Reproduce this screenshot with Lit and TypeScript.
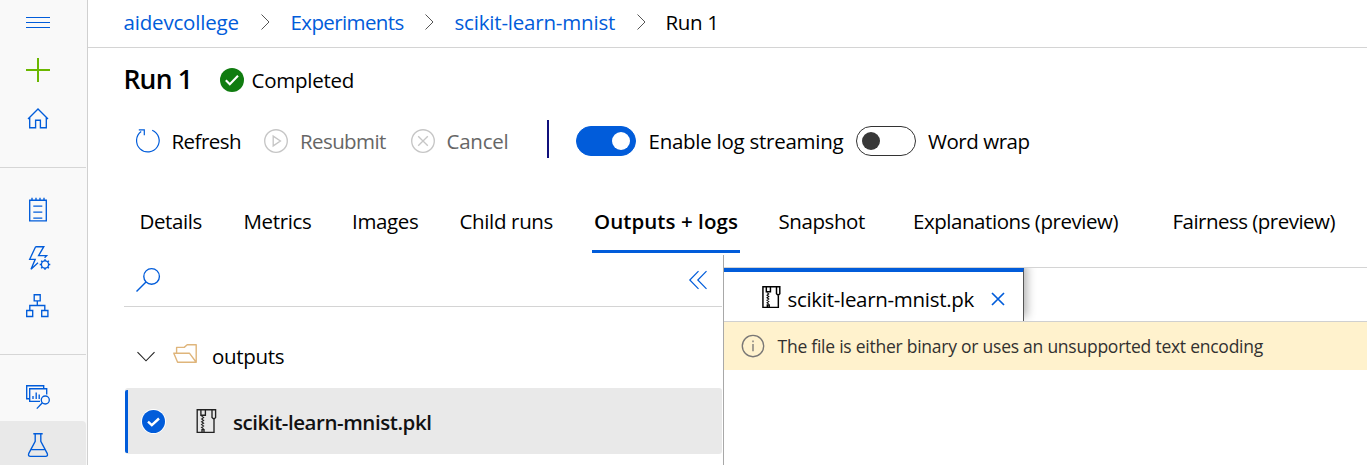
import { LitElement, html, css, svg, nothing } from "lit";
import { customElement } from "lit/decorators.js";
import { styleMap } from "lit/directives/style-map.js";

/** A run of text with the horizontal box and tracking it is set in. */
interface Label {
  text: string;
  gap: number;
  width: number;
  track: number;
  kind?: string;
}

const crumbs: Label[] = [
  { text: "aidevcollege", gap: 35.5, width: 116.5, track: -0.18, kind: "link" },
  { text: "Experiments", gap: 50.5, width: 113.5, track: -0.61, kind: "link" },
  { text: "scikit-learn-mnist", gap: 50.5, width: 161.5, track: -0.19, kind: "link" },
  { text: "Run 1", gap: 49.5, width: 60, track: -0.35 },
];

const tabs: Label[] = [
  { text: "Details", gap: 51.5, width: 63.5, track: -0.4 },
  { text: "Metrics", gap: 40.5, width: 69.5, track: -0.35 },
  { text: "Images", gap: 39, width: 68, track: -0.35 },
  { text: "Child runs", gap: 39.5, width: 95, track: -0.35 },
  { text: "Outputs + logs", gap: 37.5, width: 148, track: 0.06, kind: "active" },
  { text: "Snapshot", gap: 38.5, width: 87.5, track: -0.42 },
  { text: "Explanations (preview)", gap: 47, width: 207, track: -0.45 },
  { text: "Fairness (preview)", gap: 52.5, width: 164, track: -0.52 },
];

const icon = (body: unknown, cls = "") =>
  html`<svg class="icon ${cls}" viewBox="0 0 24 24" width="24" height="24">${body}</svg>`;

const icons = {
  menu: icon(svg`<path stroke-width="1" d="M0 7.5H24M0 12.5H24M0 17.5H24"/>`),
  add: icon(svg`<path stroke-width="2" d="M0 12H24M12 0V24"/>`, "green"),
  home: icon(svg`<path d="M2 13 12 3 22 13M3.7 11.6V21.7H9.6V14.2H14.4V21.7H20.3V11.6"/>`),
  notebook: icon(svg`<path d="M3.7 2.7H20.3V23.3H3.7ZM6 .2V3M10 .2V3M14 .2V3M18 .2V3M7.3 8.6H16.3M7.3 14.6H16.3M7.3 20.6H16.3" transform="translate(0 -.5)"/>`),
  automl: icon(svg`<path d="M9.6.7H17.8L12.6 9.6H20.6L18.6 11.7M9.6.7 3.7 13.3H9.2L5 23.2 12 16.8"/>
    <circle cx="19" cy="18.5" r="3.6"/>
    <path stroke-width="1.6" d="M19 15V13.2M19 22V23.8M15.5 18.5H13.7M22.5 18.5H24.3M16.5 16 15.2 14.7M21.5 16 22.8 14.7M16.5 21 15.2 22.3M21.5 21 22.8 22.3"/>`),
  designer: icon(svg`<path d="M8.2.7H14.2V6.9H8.2ZM.7 16.5H6.7V22.5H.7ZM15.7 16.5H21.9V22.5H15.7ZM11.3 7V11.5M3.8 16.5V11.5H18.8V16.5"/>`),
  datasets: icon(svg`<path d="M17.7 3.2V.7H.7V13.7H3.2M14 16.3H3.7V3.7H20.7V9.5M7 14V11M10.2 14V7.5M13.2 14V9.5"/>
    <circle cx="19.3" cy="15" r="4"/><path d="M16.4 17.8 10.8 23.6"/>`),
  flask: icon(svg`<path d="M7.3.7H16.7M9.2.7V8.4L2.7 20.6Q1.8 23.3 4.4 23.3H19.6Q22.2 23.3 21.3 20.6L14.8 8.4V.7M5.2 16.6H18.8"/>`),
  refresh: icon(svg`<path stroke-width="1.2" d="M16.2 1.2A11.3 11.3 0 1 1 5.2 2.5M2.8.8H8.3V6.2"/>`),
  play: icon(svg`<circle cx="12" cy="12" r="11.3"/><path d="M9.2 7.1 16.4 12 9.2 16.9Z"/>`, "muted"),
  cancel: icon(svg`<circle cx="12" cy="12" r="11.3"/><path d="M7.2 7.2 16.8 16.8M16.8 7.2 7.2 16.8"/>`, "muted"),
  search: icon(svg`<circle cx="15.6" cy="8.4" r="7.8"/><path d="M10 14 .5 23.5"/>`),
  collapse: icon(svg`<path stroke-width="1.2" d="M10.5 3.2 1.8 12 10.5 20.8M18.5 3.2 9.8 12 18.5 20.8" />`),
  info: icon(svg`<circle cx="12" cy="12" r="10.7"/><path d="M12 10V17.2M12 6.6V8.2"/>`, "gray"),
  close: icon(svg`<path stroke-width="1.7" d="M6 6 18 18M18 6 6 18"/>`),
  separator: icon(svg`<path stroke-width="1" d="M8.5 4.5 16 12 8.5 19.5"/>`, "dim"),
  expanded: icon(svg`<path stroke-width="1.1" d="M3.5 8.2 12 16.8 20.5 8.2"/>`, "dark"),
  folder: icon(svg`<path stroke-width="1.4" stroke-linejoin="round" d="M3.6 9.2V3.4H11.2L14.2.8H23.2V18.2H4.6L.8 9.2H16.4L23 18"/>`, "tan"),
};

/** Archive file: page with a zipper down its left side and a pull tab at the right. */
const zip = (size: number) => html`<svg class="icon zip" viewBox="0 0 24 24" width=${size} height=${size}>
  <path d="M18 .7H3.2V23.3H20V10M6.9.7V6.2H11.4V.7M8 23V20.6H10V23"/>
  <path d="M18 .7H21.6V8.4L20.5 9.6H19.2L18 8.4Z"/>
  <path stroke-width="1.1" d="M7.6 7.2 9.6 8.6 7.6 10 9.6 11.4 7.6 12.8 9.6 14.2 7.6 15.6 9.6 17 7.6 18.4 9.6 19.8"/>
</svg>`;

const text = (l: Label, cls = "") => html`<span
  class="label ${cls} ${l.kind ?? ""}"
  style=${styleMap({ marginLeft: `${l.gap}px`, width: `${l.width}px`, letterSpacing: `${l.track}px` })}
  >${l.text}</span>`;

@customElement("app-root")
export class AppRoot extends LitElement {
  static styles = css`
    :host {
      display: flex;
      box-sizing: border-box;
      width: 100%;
      height: 465px;
      overflow: hidden;
      background: #fff;
      color: #000;
      font: 20.5px/28px "Open Sans", "Noto Sans", sans-serif;
    }
    * { box-sizing: border-box; }
    .icon { flex: none; display: block; fill: none; stroke: #015cda; stroke-width: 1.35; overflow: visible; }
    .green { stroke: #6bb700; }
    .muted { stroke: #c6c6c6; }
    .gray { stroke: #797775; }
    .dim { stroke: #555; }
    .dark { stroke: #222; }
    .tan { stroke: #dfb57b; }
    .zip { stroke: #222; }
    .label { flex: none; display: block; white-space: pre; }
    .link { color: #015cda; }

    .rail { flex: none; width: 88px; border-right: 1px solid #d0d0d0; background: #f9f9f9; padding-right: 1px; display: flex; flex-direction: column; }
    .group { flex: none; display: flex; flex-direction: column; align-items: center; gap: 24px; height: 187px; padding-top: 30px; border-top: 1px solid #d6d6d6; }
    .group.first { height: 167px; padding-top: 10px; border-top: 0; }
    .group.last { height: 67px; }
    .group .icon, .current .icon { margin-right: 10px; }
    .current { flex: none; height: 44px; padding-top: 12px; background: #e9e9e9; border-radius: 0 4px 0 0; display: flex; justify-content: center; }

    .main { flex: 1; min-width: 0; display: flex; flex-direction: column; }
    .crumbs { flex: none; height: 48px; border-bottom: 1px solid #d4d4d4; display: flex; align-items: center; padding-bottom: 3px; }
    .crumbs .icon { margin: 0 -37px 0 13px; }
    .title { flex: none; height: 62px; display: flex; align-items: center; padding-top: 2px; }
    .name { font-size: 26.5px; font-weight: 600; line-height: 32px; padding-bottom: 2px; }
    .tools { flex: none; height: 62px; display: flex; align-items: center; }
    .refresh { margin-left: 47.5px; }
    .disabled { color: #666; }
    .rule { width: 2px; height: 38px; margin: -5px 27px 0 37px; background: #10107c; }
    .toggle { flex: none; width: 60px; height: 30px; border-radius: 15px; border: 1px solid #333; padding: 5px; display: flex; }
    .toggle.on { border-color: #015cda; background: #015cda; justify-content: flex-end; }
    .knob { width: 18px; height: 18px; border-radius: 50%; background: #383838; }
    .on .knob { background: #fff; }

    .tabs { flex: none; height: 83px; display: flex; padding-top: 35px; }
    .tabs .label { height: 46px; }
    .tabs .active { font-weight: 600; padding-left: 2px; border-bottom: 3px solid #015cda; }
    .body { flex: 1; min-height: 0; display: flex; }
    .files { flex: none; width: 636px; height: 210px; border-right: 1px solid #a8a8a8; padding-left: 36px; }
    .find { height: 52px; width: 598px; border-bottom: 1px solid #d4d4d4; display: flex; justify-content: space-between; padding: 13px 10px 0 12px; }
    .folder-row { height: 81px; display: flex; align-items: center; padding: 17px 0 0 10px; }
    .folder-row .tan { margin-left: 15px; }
    .file-row { height: 66px; margin-left: 1px; width: 597px; background: #e9e9e9; border-radius: 3px; display: flex; align-items: center; }
    .bar { width: 3px; height: 63px; background: #015cda; border-radius: 2px 0 0 2px; }
    .check { margin-left: 13px; }
    .file-row .zip { margin-left: 28px; }
    .file-row .label { font-weight: 600; color: #111; padding-top: 2px; }
    .viewer { flex: 1; min-width: 0; padding-top: 12px; }
    .strip { height: 55px; border-top: 1px solid #d4d4d4; border-bottom: 1px solid #d0d0d0; overflow: hidden; }
    .doc { width: 300px; height: 53px; border-top: 4px solid #015cda; border-right: 1px solid #555; display: flex; align-items: center; padding: 5px 0 0 36px; box-shadow: 3px -4px 9px rgba(0, 0, 0, 0.3); }
    .doc .zip { stroke: #000; stroke-width: 1.6; margin-top: -5px; }
    .banner { height: 48px; background: #fff2cd; display: flex; align-items: center; padding-left: 17px; font-size: 17.5px; color: #323130; }
  `;

  render() {
    return html`
      <nav class="rail">
        <div class="group first">${icons.menu}${icons.add}${icons.home}</div>
        <div class="group">${icons.notebook}${icons.automl}${icons.designer}</div>
        <div class="group last">${icons.datasets}</div>
        <div class="current">${icons.flask}</div>
      </nav>
      <main class="main">
        <div class="crumbs">
          ${crumbs.map((c, i) => html`${i ? icons.separator : nothing}${text(c)}`)}
        </div>
        <div class="title">
          ${text({ text: "Run 1", gap: 35.5, width: 96.5, track: -0.8 }, "name")}
          <svg viewBox="0 0 24 24" width="24" height="24">
            <circle cx="12" cy="12" r="12" fill="#107c10" />
            <path d="M5.8 12.3 9.8 16.3 18 7.8" fill="none" stroke="#fff" stroke-width="2.1" />
          </svg>
          ${text({ text: "Completed", gap: 7.5, width: 110, track: -0.25 })}
        </div>
        <div class="tools">
          <span class="refresh">${icons.refresh}</span>
          ${text({ text: "Refresh", gap: 12, width: 92.5, track: -0.55 })}${icons.play}
          ${text({ text: "Resubmit", gap: 12, width: 110.5, track: -0.6 }, "disabled")}${icons.cancel}
          ${text({ text: "Cancel", gap: 12, width: 63.5, track: -0.24 }, "disabled")}
          <span class="rule"></span>
          <span class="toggle on"><span class="knob"></span></span>
          ${text({ text: "Enable log streaming", gap: 12.5, width: 207.5, track: -0.26 })}
          <span class="toggle"><span class="knob"></span></span>
          ${text({ text: "Word wrap", gap: 12, width: 110, track: -0.45 })}
        </div>
        <div class="tabs">${tabs.map((t) => text(t))}</div>
        <div class="body">
          <section class="files">
            <div class="find">${icons.search}${icons.collapse}</div>
            <div class="folder-row">
              ${icons.expanded}${icons.folder}
              ${text({ text: "outputs", gap: 15, width: 80, track: -0.3 })}
            </div>
            <div class="file-row">
              <span class="bar"></span>
              <svg class="check" viewBox="0 0 25 25" width="25" height="25">
                <circle cx="12.5" cy="12.5" r="12.5" fill="#fff" />
                <circle cx="12.5" cy="12.5" r="11.5" fill="#015cda" />
                <path d="M7 12.7 10.8 16.2 18 9.5" fill="none" stroke="#fff" stroke-width="2.4" />
              </svg>
              ${zip(24)}
              ${text({ text: "scikit-learn-mnist.pkl", gap: 15, width: 210, track: -0.44 })}
            </div>
          </section>
          <section class="viewer">
            <div class="strip">
              <div class="doc">
                ${zip(22)}
                ${text({ text: "scikit-learn-mnist.pk", gap: 5.5, width: 198.5, track: -0.3 })}
                ${icons.close}
              </div>
            </div>
            <div class="banner">
              ${icons.info}
              ${text({ text: "The file is either binary or uses an unsupported text encoding", gap: 12.5, width: 500, track: -0.245 })}
            </div>
          </section>
        </div>
      </main>
    `;
  }
}
